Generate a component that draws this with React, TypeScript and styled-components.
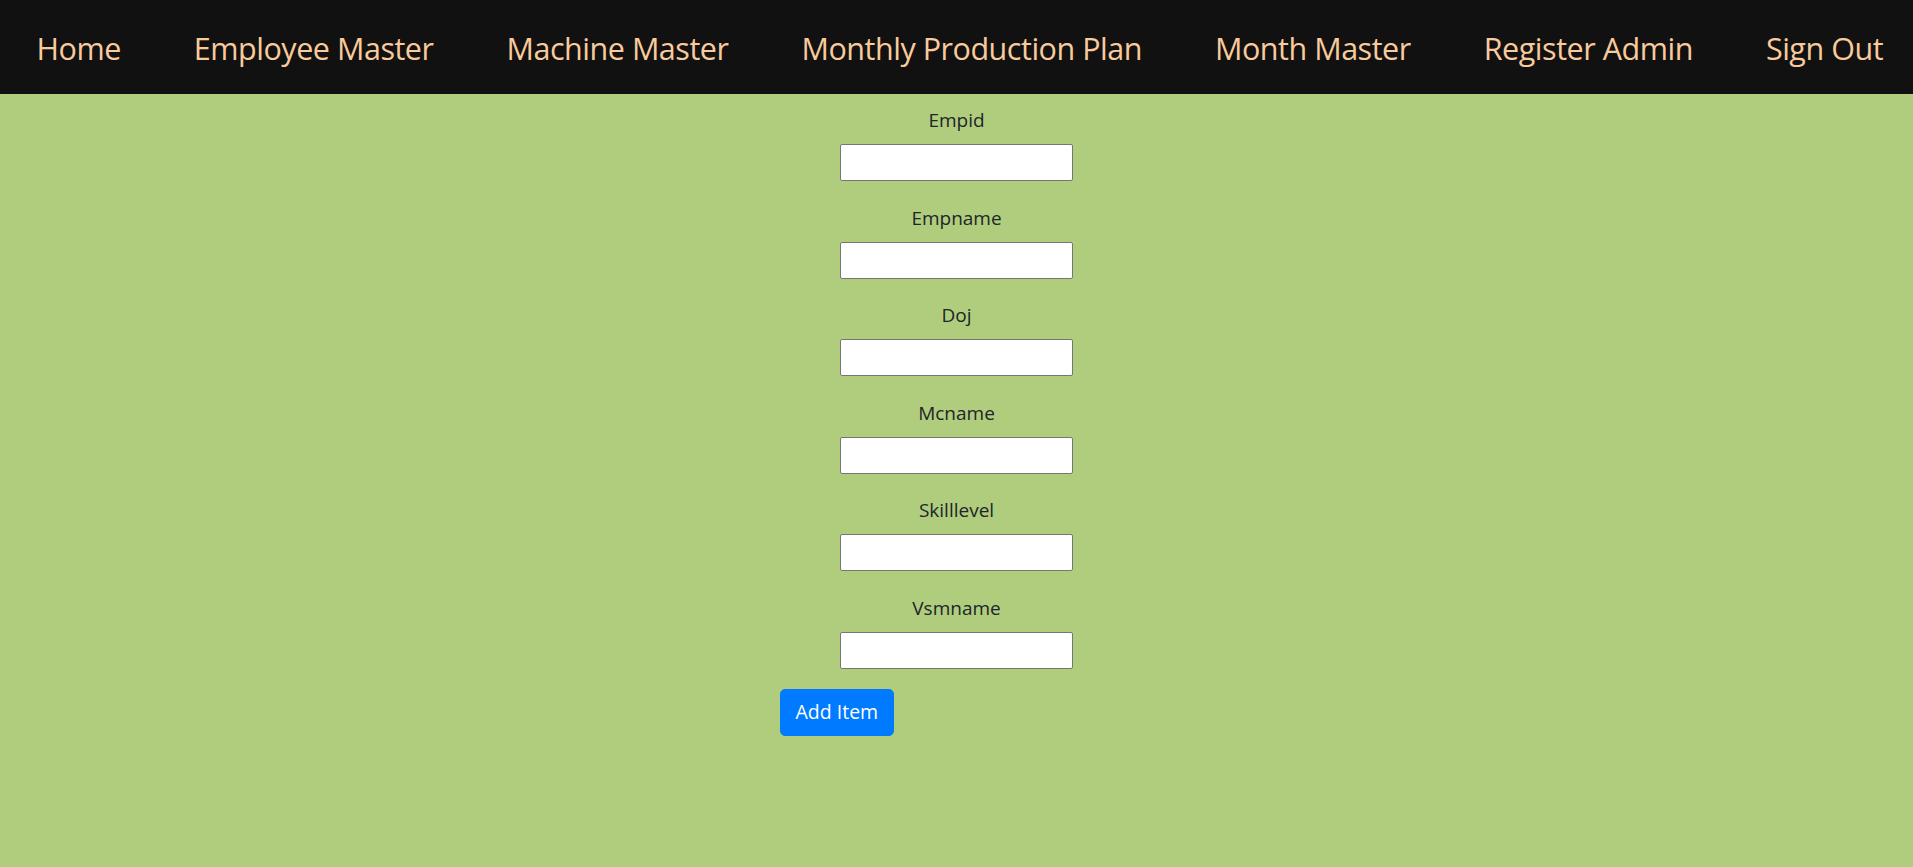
import React, {useState} from 'react';
import styled, {createGlobalStyle} from "styled-components";

const GlobalStyle = createGlobalStyle`
html, body {
margin: 0;
padding: 0;
}
body {
background: #afcd7d;
font-family: "Open Sans", "Noto Sans", sans-serif;
color: #212529;
min-height: 867px;
}
`

const NavBar = styled.nav`
background: #111111;
height: 94px;
display: flex;
align-items: center;
`

const NavLink = styled.a`
color: #f9cb9c;
font-size: 30.5px;
letter-spacing: -0.47px;
padding: 0 36.5px;
text-decoration: none;
white-space: nowrap;
line-height: 1;
margin-top: 3px;
`

const Form = styled.form`
width: 354px;
margin: 0 auto;
padding-top: 11px;
`

const Group = styled.div`
text-align: center;

& + & {
margin-top: 21.6px;
}
`

const Label = styled.label`
display: block;
font-size: 19px;
line-height: 30px;
margin-bottom: 9px;
`

const Input = styled.input`
display: block;
margin: 0 auto;
box-sizing: border-box;
width: 233px;
height: 37px;
border: 1px solid #767676;
border-radius: 2px;
background: #ffffff;
padding: 1px 3px;
font-size: 16px;
`

const Button = styled.button`
margin-top: 20px;
background: #007bff;
color: #ffffff;
border: 1px solid #007bff;
border-radius: 5px;
font-family: inherit;
font-size: 19.5px;
line-height: 30px;
padding: 7.5px 15px;
cursor: pointer;
`

const links = ['Home', 'Employee Master', 'Machine Master', 'Monthly Production Plan', 'Month Master', 'Register Admin', 'Sign Out'];
const fields = ['Empid', 'Empname', 'Doj', 'Mcname', 'Skilllevel', 'Vsmname'];

const App = () => {
    const [values, setValues] = useState<Record<string, string>>({});

    return (
        <div>
            <GlobalStyle/>
            <NavBar>
                {links.map(l => <NavLink key={l} href="#">{l}</NavLink>)}
            </NavBar>
            <Form onSubmit={e => e.preventDefault()}>
                {fields.map(f => (
                    <Group key={f}>
                        <Label htmlFor={f}>{f}</Label>
                        <Input id={f} type="text" value={values[f] || ''}
                               onChange={e => setValues({...values, [f]: e.target.value})}/>
                    </Group>
                ))}
                <Button type="submit">Add Item</Button>
            </Form>
        </div>
    )
}

export default App
